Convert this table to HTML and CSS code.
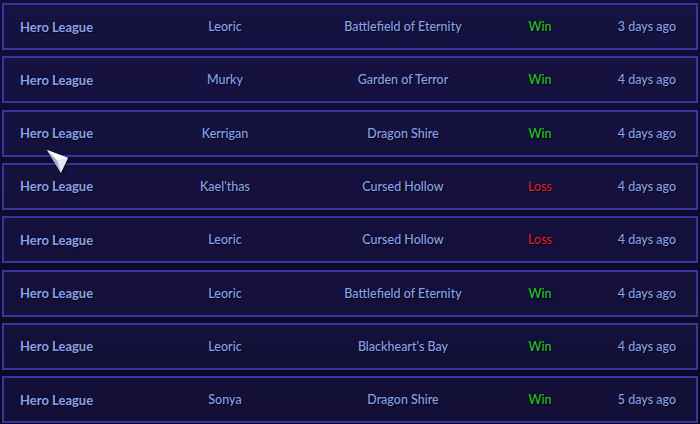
FILE: index.html
```html
<!DOCTYPE html>
<html>
<head>
<meta charset="utf-8">
<link rel="stylesheet" href="styles.css">
</head>
<body>
<div class="list">
  <div class="row"><span class="c mode">Hero League</span><span class="c hero">Leoric</span><span class="c map">Battlefield of Eternity</span><span class="c res win">Win</span><span class="c when">3 days ago</span></div>
  <div class="row"><span class="c mode">Hero League</span><span class="c hero">Murky</span><span class="c map">Garden of Terror</span><span class="c res win">Win</span><span class="c when">4 days ago</span></div>
  <div class="row"><span class="c mode">Hero League</span><span class="c hero">Kerrigan</span><span class="c map">Dragon Shire</span><span class="c res win">Win</span><span class="c when">4 days ago</span></div>
  <div class="row"><span class="c mode">Hero League</span><span class="c hero">Kael'thas</span><span class="c map">Cursed Hollow</span><span class="c res loss">Loss</span><span class="c when">4 days ago</span></div>
  <div class="row"><span class="c mode">Hero League</span><span class="c hero">Leoric</span><span class="c map">Cursed Hollow</span><span class="c res loss">Loss</span><span class="c when">4 days ago</span></div>
  <div class="row"><span class="c mode">Hero League</span><span class="c hero">Leoric</span><span class="c map">Battlefield of Eternity</span><span class="c res win">Win</span><span class="c when">4 days ago</span></div>
  <div class="row"><span class="c mode">Hero League</span><span class="c hero">Leoric</span><span class="c map">Blackheart's Bay</span><span class="c res win">Win</span><span class="c when">4 days ago</span></div>
  <div class="row"><span class="c mode">Hero League</span><span class="c hero">Sonya</span><span class="c map">Dragon Shire</span><span class="c res win">Win</span><span class="c when">5 days ago</span></div>
  <svg class="cursor" width="28" height="28" viewBox="0 0 28 28">
    <polygon points="2,1 23,9 16,24" fill="#dfe7f0"/>
    <polygon points="2,1 12,11 16,24" fill="#9fb0c4"/>
    <polygon points="2,1 23,9 12,11" fill="#ffffff"/>
  </svg>
</div>
</body>
</html>
```
FILE: styles.css
```css
html, body {
  margin: 0;
  padding: 0;
}
body {
  width: 700px;
  height: 424px;
  overflow: hidden;
  background: linear-gradient(180deg, #110e34 0%, #0a0920 100%);
  font-family: Lato, "Noto Sans", sans-serif;
}
.list {
  position: relative;
  display: flex;
  flex-direction: column;
  gap: 6.33px;
  padding: 3px 2px 0 2px;
}
.row {
  box-sizing: border-box;
  height: 47px;
  border: 2px solid #3b32a3;
  background: rgba(28, 22, 78, 0.5);
  display: grid;
  grid-template-columns: 146px 150px 206px 68px 1fr;
  align-items: center;
  font-size: 12.5px;
  color: #86a2ec;
  text-shadow: 1px 1px 1px #05040f;
}
.c {
  text-align: center;
  white-space: nowrap;
}
.mode {
  text-align: left;
  padding-left: 16px;
  font-weight: 700;
  font-size: 13px;
}
.hero, .map, .when {
  font-weight: 500;
}
.when {
  text-align: right;
  padding-right: 20px;
}
.win {
  color: #25c41f;
  font-weight: 500;
}
.loss {
  color: #d8222a;
  font-weight: 500;
}
.cursor {
  position: absolute;
  left: 45px;
  top: 149px;
  filter: drop-shadow(1px 2px 1px rgba(0,0,0,0.6));
}
```
